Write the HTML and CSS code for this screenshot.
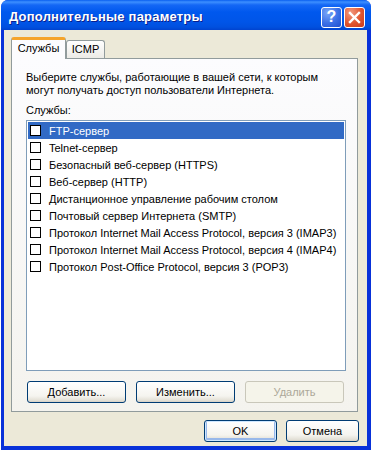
FILE: index.html
```html
<!DOCTYPE html>
<html lang="ru">
<head>
    <meta charset="UTF-8">
    <title>Дополнительные параметры</title>
    <link rel="stylesheet" href="styles.css">
</head>
<body>
    <div class="window">
        <div class="titlebar">
            <span class="title">Дополнительные параметры</span>
            <div class="title-buttons">
                <span class="tbtn help">?</span>
                <span class="tbtn close">
                    <svg width="13" height="13" viewBox="0 0 13 13"><path d="M2 2 L11 11 M11 2 L2 11" stroke="#fff" stroke-width="2.4" stroke-linecap="square"/></svg>
                </span>
            </div>
        </div>
        <div class="client">
            <div class="tabs">
                <div class="tab active">Службы</div>
                <div class="tab">ICMP</div>
            </div>
            <div class="panel">
                <p class="desc">Выберите службы, работающие в вашей сети, к которым могут получать доступ пользователи Интернета.</p>
                <div class="label">Службы:</div>
                <ul class="services">
                    <li class="selected"><span class="check"></span>FTP-сервер</li>
                    <li><span class="check"></span>Telnet-сервер</li>
                    <li><span class="check"></span>Безопасный веб-сервер (HTTPS)</li>
                    <li><span class="check"></span>Веб-сервер (HTTP)</li>
                    <li><span class="check"></span>Дистанционное управление рабочим столом</li>
                    <li><span class="check"></span>Почтовый сервер Интернета (SMTP)</li>
                    <li><span class="check"></span>Протокол Internet Mail Access Protocol, версия 3 (IMAP3)</li>
                    <li><span class="check"></span>Протокол Internet Mail Access Protocol, версия 4 (IMAP4)</li>
                    <li><span class="check"></span>Протокол Post-Office Protocol, версия 3 (POP3)</li>
                </ul>
                <div class="list-buttons">
                    <button class="btn wide">Добавить...</button>
                    <button class="btn wide">Изменить...</button>
                    <button class="btn wide" disabled>Удалить</button>
                </div>
            </div>
            <div class="footer">
                <button class="btn default">OK</button>
                <button class="btn">Отмена</button>
            </div>
        </div>
    </div>
</body>
</html>
```
FILE: styles.css
```css
body {
    margin: 0;
    background: #fff;
    font-family: 'Liberation Sans', Arial, sans-serif;
    font-size: 11px;
    color: #000;
    overflow: hidden;
}
.window {
    margin-left: 1px;
    width: 370px;
    height: 450px;
    display: flex;
    flex-direction: column;
    background: #0831d9;
    border-radius: 7px 7px 0 0;
    overflow: hidden;
}
.titlebar {
    height: 30px;
    flex: none;
    display: flex;
    align-items: center;
    justify-content: space-between;
    padding: 0 6px 0 8px;
    background: linear-gradient(#0a5ff0 0, #3d8fff 2px, #1467f5 5px, #0058ee 12px, #0055e8 22px, #0050df 27px, #0043cf 30px);
    box-sizing: border-box;
}
.title {
    color: #fff;
    font-weight: bold;
    font-size: 13px;
    letter-spacing: 0.2px;
    text-shadow: 1px 1px 0 #0a1e8c;
    padding-top: 2px;
}
.title-buttons {
    display: flex;
    gap: 2px;
    padding-top: 4px;
}
.tbtn {
    width: 21px;
    height: 21px;
    box-sizing: border-box;
    border: 1px solid #fff;
    border-radius: 3px;
    display: flex;
    align-items: center;
    justify-content: center;
    color: #fff;
    font-weight: bold;
    font-size: 16px;
}
.help {
    background: radial-gradient(circle at 30% 25%, #7aa6f8, #3a6fe6 55%, #1f4fcf);
}
.close {
    background: radial-gradient(circle at 30% 25%, #f29a80, #e0552f 55%, #c8391a);
}
.client {
    flex: 1;
    margin: 0 4px 4px 3px;
    background: #ece9d8;
    padding: 7px 8px 0 7px;
}
.tabs {
    display: flex;
    align-items: flex-end;
    height: 21px;
}
.tab {
    width: 39px;
    height: 18px;
    box-sizing: border-box;
    border: 1px solid #919b9c;
    border-bottom: none;
    border-radius: 3px 3px 0 0;
    background: linear-gradient(#fff, #ecebe6);
    line-height: 17px;
    text-align: center;
}
.tab.active {
    width: 55px;
    height: 22px;
    margin-bottom: -1px;
    border-top: 3px solid #f5a42b;
    background: #fcfcfe;
    line-height: 17px;
    position: relative;
    z-index: 1;
}
.panel {
    width: 347px;
    height: 354px;
    box-sizing: border-box;
    border: 1px solid #919b9c;
    background: linear-gradient(#fcfcfe, #f4f3ee);
    padding: 12px 0 0 14px;
}
.desc {
    margin: 0;
    line-height: 13px;
    width: 310px;
}
.label {
    margin-top: 7px;
    line-height: 13px;
}
.services {
    list-style: none;
    margin: 3px 0 0;
    padding: 1px;
    width: 320px;
    height: 251px;
    box-sizing: border-box;
    border: 1px solid #7f9db9;
    background: #fff;
}
.services li {
    height: 17px;
    display: flex;
    align-items: center;
    padding-left: 2px;
    white-space: nowrap;
}
.services li.selected {
    background: #316ac5;
    color: #fff;
}
.check {
    width: 11px;
    height: 11px;
    box-sizing: border-box;
    border: 1px solid #000;
    background: #fff;
    margin-right: 8px;
    flex: none;
}
.list-buttons {
    display: flex;
    gap: 10px;
    margin: 10px 0 0 1px;
}
.btn {
    font-family: 'Liberation Sans', Arial, sans-serif;
    font-size: 11px;
    color: #000;
    width: 73px;
    height: 22px;
    padding: 0;
    border: 1px solid #003c74;
    border-radius: 3px;
    background: linear-gradient(#fff, #f5f4ef 70%, #e3e0d6 92%, #d6d0c5);
}
.btn.wide {
    width: 99px;
}
.btn:disabled {
    border-color: #c9c7ba;
    background: #f5f4ea;
    color: #aca899;
}
.btn.default {
    box-shadow: inset 0 0 0 1px #cee7ff, inset 0 -1px 0 2px #98b8ea;
}
.footer {
    display: flex;
    justify-content: flex-end;
    gap: 9px;
    margin-top: 8px;
}
```
